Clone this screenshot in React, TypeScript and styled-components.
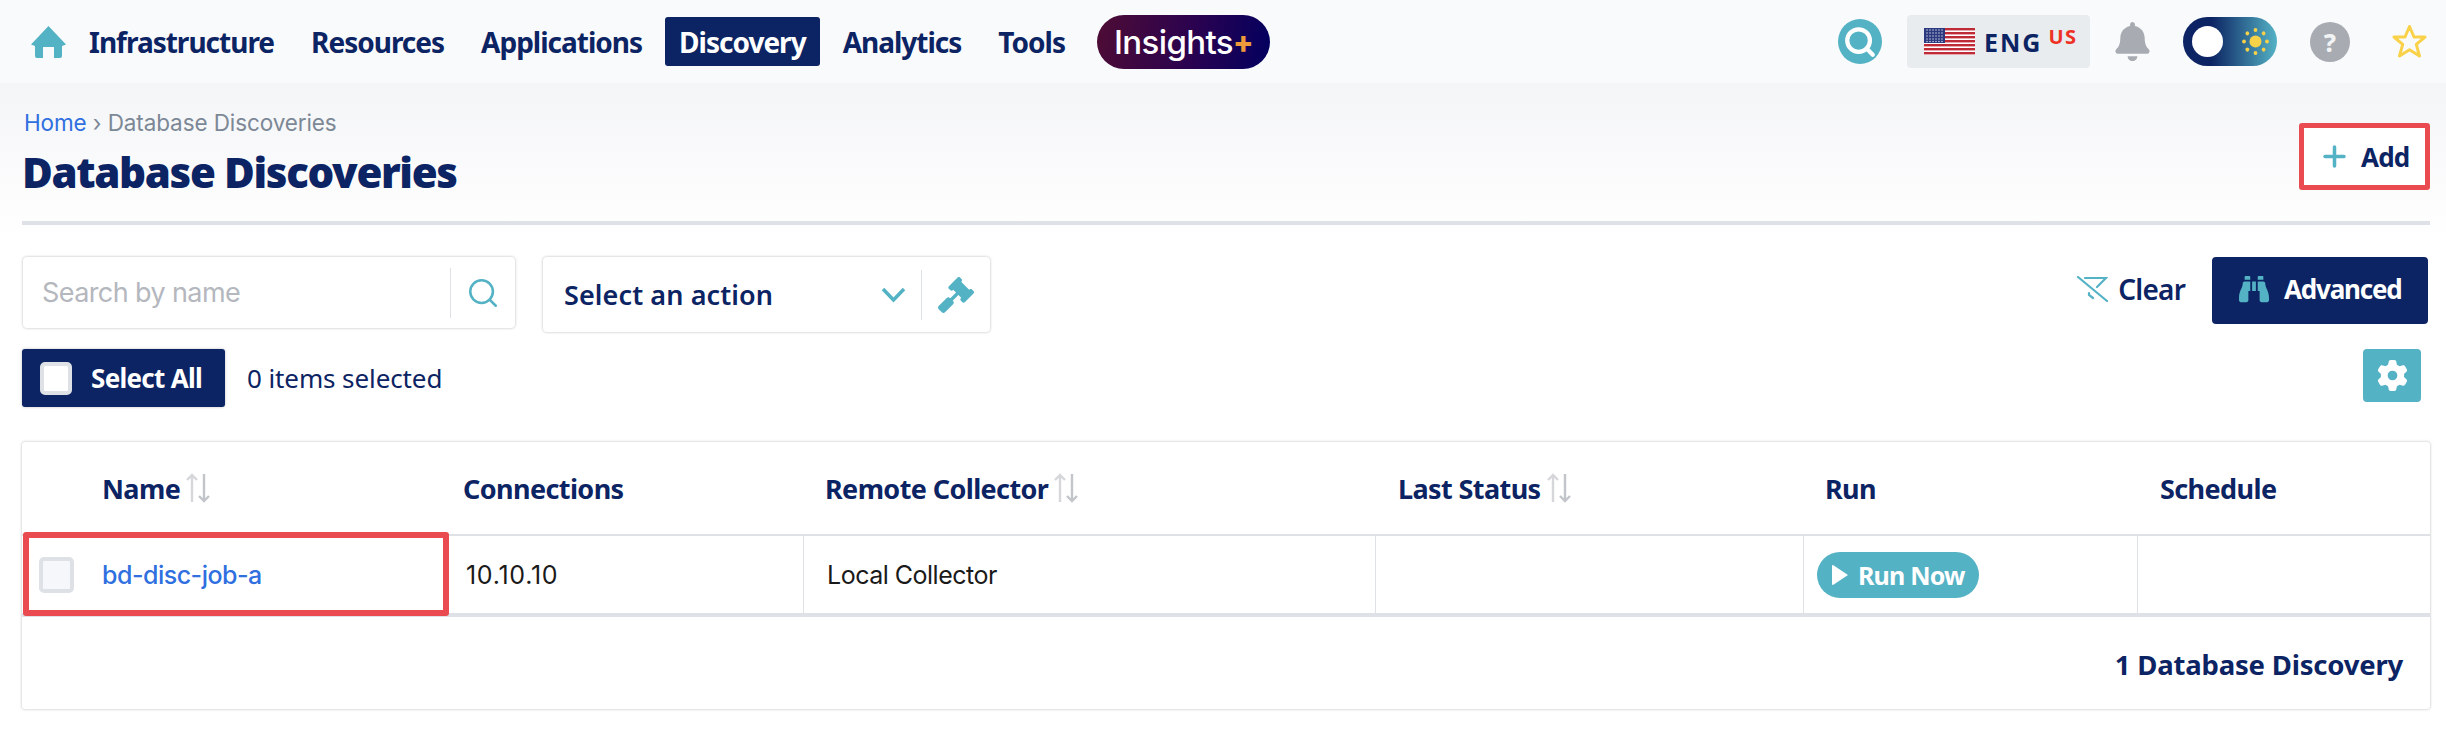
import React from "react";
import styled, { createGlobalStyle } from "styled-components";
import { Search } from "lucide-react";
import { FaGavel, FaBinoculars, FaBell } from "react-icons/fa";
import { FaGear } from "react-icons/fa6";

const NAVY = "#0c2463";
const TEAL = "#54b2c5";
const HEAD = `"Noto Sans", "Open Sans", sans-serif`;
const BODY = `"Inter", "Noto Sans", sans-serif`;

const GlobalStyle = createGlobalStyle`
  html, body {
    margin: 0;
    background: #fff;
    font-family: ${BODY};
    color: ${NAVY};
  }
  * { box-sizing: border-box; }
`;

const TopBar = styled.header`
  height: 83px;
  display: flex;
  align-items: center;
  padding: 0 19px 0 31px;
  background: #f9fafc;
`;

const HomeLink = styled.a`
  width: 35px;
  height: 32px;
  margin-right: 9px;
  display: flex;
`;

const NavLink = styled.a<{ $active?: boolean }>`
  height: 49px;
  display: flex;
  align-items: center;
  padding: 0 14px;
  margin-right: 9px;
  border-radius: 3px;
  font: 700 28px ${HEAD};
  letter-spacing: -1px;
  color: ${(p) => (p.$active ? "#fff" : NAVY)};
  background: ${(p) => (p.$active ? NAVY : "transparent")};
`;

const InsightsPill = styled.a`
  width: 173px;
  height: 54px;
  margin-left: 9px;
  border-radius: 27px;
  display: flex;
  align-items: center;
  justify-content: center;
  background: linear-gradient(100deg, #4e0c34 0%, #2a0250 55%, #02005f 100%);
  color: #fff;
  font: 500 33px ${BODY};
  letter-spacing: -0.6px;
`;

const InsightsPlus = styled.span`
  color: #ee9a3a;
  font-weight: 800;
  font-size: 30px;
`;

const TopRight = styled.div`
  margin-left: auto;
  display: flex;
  align-items: center;
`;

const SearchCircle = styled.span`
  width: 44px;
  height: 45px;
  border-radius: 50%;
  background: ${TEAL};
  display: flex;
  align-items: center;
  justify-content: center;
  color: #fff;
  margin-right: 25px;
`;

const LangBox = styled.div`
  width: 183px;
  height: 53px;
  border-radius: 4px;
  background: #e9ecef;
  display: flex;
  align-items: center;
  padding-left: 17px;
  margin-right: 25px;
`;

const LangText = styled.span`
  font: 700 25px ${HEAD};
  letter-spacing: 2px;
  margin-left: 9px;
`;

const LangRegion = styled.span`
  font: 700 20px ${HEAD};
  letter-spacing: 1.5px;
  color: #ee3124;
  margin: -11px 0 0 6px;
`;

const BellIcon = styled(FaBell)`
  width: 35px;
  height: 39px;
  color: #a8acb2;
  margin-right: 33px;
`;

const ThemeToggle = styled.div`
  width: 94px;
  height: 49px;
  border-radius: 25px;
  background: linear-gradient(90deg, ${NAVY} 30%, ${TEAL} 100%);
  display: flex;
  align-items: center;
  justify-content: space-between;
  padding: 0 8px 0 9px;
  margin-right: 33px;
`;

const ToggleKnob = styled.span`
  width: 31px;
  height: 31px;
  border-radius: 50%;
  background: #fff;
`;

const HelpCircle = styled.span`
  width: 40px;
  height: 40px;
  border-radius: 50%;
  background: #a8acb2;
  color: #f2f3f5;
  display: flex;
  align-items: center;
  justify-content: center;
  font: 800 25px ${HEAD};
  margin-right: 42px;
`;

const Main = styled.main`
  padding: 0 16px 0 22px;
  background: linear-gradient(180deg, #f4f5f7 0, #ffffff 160px);
  height: 647px;
`;

const PageHead = styled.div`
  height: 142px;
  display: flex;
  justify-content: space-between;
  border-bottom: 4px solid #dee2e6;
`;

const Crumbs = styled.div`
  padding-top: 26px;
  font: 400 22.5px/28px ${BODY};
  color: #7c8896;
  letter-spacing: -0.1px;
  padding-left: 2px;
`;

const CrumbLink = styled.a`
  color: #2f6fe0;
`;

const Title = styled.h1`
  margin: 7px 0 0;
  font: 900 42px/56px ${HEAD};
  letter-spacing: -1.35px;
`;

const AddButton = styled.button`
  width: 131px;
  height: 67px;
  margin-top: 40px;
  background: #fff;
  border: 5px solid #e94b50;
  border-radius: 3px;
  display: flex;
  align-items: center;
  padding: 0 0 0 19px;
  gap: 15px;
  color: ${NAVY};
  font: 700 26px ${HEAD};
  letter-spacing: -0.8px;
`;

const ToolRow = styled.div`
  display: flex;
  align-items: flex-start;
  margin-top: 32px;
`;

const SearchField = styled.div`
  width: 492px;
  height: 71px;
  margin-left: 1px;
  background: #fff;
  border-radius: 4px;
  box-shadow: 0 0 3px rgba(0, 0, 0, 0.28);
  display: flex;
  align-items: center;
  padding-left: 19px;
`;

const Placeholder = styled.span`
  flex: 1;
  font: 400 27px ${BODY};
  letter-spacing: -0.6px;
  color: #b4b7bd;
`;

const FieldIcon = styled.span<{ $width: number }>`
  width: ${(p) => p.$width}px;
  height: 50px;
  border-left: 1px solid #dee2e6;
  display: flex;
  align-items: center;
  justify-content: center;
  color: ${TEAL};
`;

const ActionSelect = styled(SearchField)`
  width: 447px;
  height: 75px;
  margin-left: 28px;
  padding-left: 21px;
`;

const ActionLabel = styled.span`
  flex: 1;
  font: 600 27px ${HEAD};
  letter-spacing: 0.1px;
`;

const Chevron = styled.svg`
  margin-right: 15px;
`;

const RightTools = styled.div`
  margin-left: auto;
  display: flex;
  align-items: flex-start;
`;

const ClearLink = styled.a`
  display: flex;
  align-items: center;
  height: 63px;
  gap: 10px;
  font: 600 28px ${HEAD};
  letter-spacing: -0.8px;
  margin-right: 27px;
`;

const AdvancedButton = styled.button`
  width: 216px;
  height: 67px;
  margin-right: 2px;
  border: 0;
  border-radius: 4px;
  background: ${NAVY};
  display: flex;
  align-items: center;
  padding: 0 0 3px 27px;
  gap: 15px;
  color: #fff;
  font: 700 26px ${HEAD};
  letter-spacing: -1.2px;
`;

const SelectRow = styled.div`
  display: flex;
  align-items: flex-start;
  margin-top: 17px;
  height: 58px;
`;

const SelectAll = styled.button`
  width: 203px;
  height: 58px;
  border: 0;
  border-radius: 3px;
  background: ${NAVY};
  box-shadow: 0 0 3px rgba(0, 0, 0, 0.25);
  display: flex;
  align-items: center;
  padding-left: 18px;
  gap: 19px;
  color: #fff;
  font: 700 26px ${HEAD};
  letter-spacing: -0.7px;
`;

const CheckSquare = styled.span<{ $size: number }>`
  width: ${(p) => (p.$size === 33 ? 32 : 35)}px;
  height: ${(p) => p.$size}px;
  flex: none;
  border-radius: 5px;
  background: ${(p) => (p.$size === 33 ? "#fff" : "#f5f7fa")};
  border: 4px solid #dee2e6;
`;

const SelectedCount = styled.span`
  margin-left: 22px;
  font: 400 26px/58px ${HEAD};
  letter-spacing: -0.1px;
`;

const GearButton = styled.button`
  margin-left: auto;
  margin-right: 9px;
  width: 58px;
  height: 53px;
  border: 0;
  border-radius: 4px;
  background: ${TEAL};
  color: #fff;
  display: flex;
  align-items: center;
  justify-content: center;
`;

const TableCard = styled.section`
  margin-top: 35px;
  height: 267px;
  background: #fff;
  border-radius: 3px;
  box-shadow: 0 0 3px rgba(0, 0, 0, 0.28);
`;

const Row = styled.div<{ $height: number }>`
  position: relative;
  height: ${(p) => p.$height}px;
  display: grid;
  grid-template-columns: 426px 355px 572px 428px 334px 1fr;
`;

const HeadCell = styled.div<{ $pad: number }>`
  display: flex;
  align-items: center;
  gap: 5px;
  padding-left: ${(p) => p.$pad}px;
  font: 700 27px ${HEAD};
  letter-spacing: -0.6px;
`;

const DataRow = styled(Row)`
  border-top: 2px solid #dee2e6;
  border-bottom: 4px solid #dee2e6;
`;

const Cell = styled.div<{ $pad: number; $first?: boolean }>`
  display: flex;
  align-items: center;
  padding-left: ${(p) => p.$pad}px;
  border-left: ${(p) => (p.$first ? "0" : "1px solid #dee2e6")};
  font: 400 25px ${BODY};
  letter-spacing: -0.5px;
  color: #1a1a1a;
`;

const IpCell = styled(Cell)`
  letter-spacing: 0.7px;
`;

const JobLink = styled.a`
  color: #2f6fe0;
  margin-left: 28px;
  font-weight: 500;
`;

const RunNow = styled.button`
  width: 162px;
  height: 46px;
  border: 0;
  border-radius: 23px;
  background: ${TEAL};
  color: #fff;
  display: flex;
  align-items: center;
  gap: 9px;
  padding-left: 14px;
  font: 700 25px ${HEAD};
  letter-spacing: -0.8px;
`;

const RowHighlight = styled.div`
  position: absolute;
  left: 1px;
  top: -4px;
  width: 426px;
  height: 84px;
  border: 6px solid #e94b50;
  border-radius: 3px;
  pointer-events: none;
`;

const Footer = styled.div`
  height: 94px;
  display: flex;
  align-items: center;
  justify-content: flex-end;
  padding-right: 27px;
  font: 700 27.5px ${HEAD};
  letter-spacing: -0.2px;
`;

const Home = () => (
  <svg width="35" height="32" viewBox="0 0 35 32" fill={TEAL}>
    <path d="M17.5 0 35 18.5 31 20v10a2 2 0 0 1-2 2h-6V21h-11v11H6a2 2 0 0 1-2-2V20L0 18.5Z" />
  </svg>
);

const Flag = () => (
  <svg width="51" height="27" viewBox="0 0 51 27">
    <rect width="51" height="27" fill="#fff" />
    {[0, 4, 8, 12, 16, 20, 24].map((y) => (
      <rect key={y} y={y} width="51" height="2.4" fill="#bf2a37" />
    ))}
    <rect width="21" height="15" fill="#2b3a7e" />
    {[2, 5, 8, 11, 14, 17].map((x) =>
      [2, 5, 8, 11, 13.5].map((y) => (
        <circle key={`${x}-${y}`} cx={x + 1} cy={y} r="0.7" fill="#dfe3f2" />
      ))
    )}
  </svg>
);

const Sun = () => (
  <svg width="27" height="27" viewBox="0 0 27 27" fill="#f7d148">
    <circle cx="13.5" cy="13.5" r="6" />
    {[0, 45, 90, 135, 180, 225, 270, 315].map((a) => (
      <circle key={a} cx="13.5" cy="2" r="1.9" transform={`rotate(${a} 13.5 13.5)`} />
    ))}
  </svg>
);

const FavStar = () => (
  <svg width="35" height="35" viewBox="0 0 35 35" fill="none" stroke="#f9d24a" strokeWidth="3" strokeLinejoin="round">
    <path d="M17.5 2.5 22 13h11l-8.7 7.4L27.5 32l-10-6.3L7.5 32l3.2-11.6L2 13h11Z" />
  </svg>
);

const Plus = () => (
  <svg width="23" height="23" viewBox="0 0 23 23" stroke={TEAL} strokeWidth="3.5" strokeLinecap="round">
    <path d="M11.5 2v19M2 11.5h19" />
  </svg>
);

const ClearFilter = () => (
  <svg width="31" height="26" viewBox="0 0 31 26" fill="none" stroke={TEAL} strokeWidth="2.2" strokeLinecap="round">
    <path d="M1 1 30 25M8 2h21l-9 9M12 17v2l4 3" />
  </svg>
);

const SortArrows = () => (
  <svg width="26" height="30" viewBox="0 0 26 30" fill="none" strokeWidth="2.4">
    <path d="M7 29V2M2 7l5-5 5 5" stroke="#d5d7da" />
    <path d="M19 1v27M14 23l5 5 5-5" stroke="#c2c5c9" />
  </svg>
);

const PlayMark = () => (
  <svg width="18" height="22" viewBox="0 0 18 22" fill="#fff">
    <path d="M2 1 17 11 2 21a1 1 0 0 1-1-1V2a1 1 0 0 1 1-1Z" />
  </svg>
);

const columns: { label: string; pad: number; sort?: boolean }[] = [
  { label: "Name", pad: 80, sort: true },
  { label: "Connections", pad: 15 },
  { label: "Remote Collector", pad: 22, sort: true },
  { label: "Last Status", pad: 23, sort: true },
  { label: "Run", pad: 22 },
  { label: "Schedule", pad: 23 },
];

export default function App() {
  return (
    <>
      <GlobalStyle />
      <TopBar>
        <HomeLink>
          <Home />
        </HomeLink>
        {["Infrastructure", "Resources", "Applications", "Discovery", "Analytics", "Tools"].map((item) => (
          <NavLink key={item} $active={item === "Discovery"}>
            {item}
          </NavLink>
        ))}
        <InsightsPill>
          Insights<InsightsPlus>+</InsightsPlus>
        </InsightsPill>
        <TopRight>
          <SearchCircle>
            <Search size={34} strokeWidth={3} />
          </SearchCircle>
          <LangBox>
            <Flag />
            <LangText>ENG</LangText>
            <LangRegion>US</LangRegion>
          </LangBox>
          <BellIcon />
          <ThemeToggle>
            <ToggleKnob />
            <Sun />
          </ThemeToggle>
          <HelpCircle>?</HelpCircle>
          <FavStar />
        </TopRight>
      </TopBar>
      <Main>
        <PageHead>
          <div>
            <Crumbs>
              <CrumbLink>Home</CrumbLink> › Database Discoveries
            </Crumbs>
            <Title>Database Discoveries</Title>
          </div>
          <AddButton>
            <Plus />
            Add
          </AddButton>
        </PageHead>
        <ToolRow>
          <SearchField>
            <Placeholder>Search by name</Placeholder>
            <FieldIcon $width={65}>
              <Search size={34} strokeWidth={1.8} />
            </FieldIcon>
          </SearchField>
          <ActionSelect>
            <ActionLabel>Select an action</ActionLabel>
            <Chevron width="25" height="16" viewBox="0 0 25 16" fill="none" stroke={TEAL} strokeWidth="3.5">
              <path d="M2 2l10.5 11L23 2" />
            </Chevron>
            <FieldIcon $width={69}>
              <FaGavel size={36} />
            </FieldIcon>
          </ActionSelect>
          <RightTools>
            <ClearLink>
              <ClearFilter />
              Clear
            </ClearLink>
            <AdvancedButton>
              <FaBinoculars size={30} color={TEAL} />
              Advanced
            </AdvancedButton>
          </RightTools>
        </ToolRow>
        <SelectRow>
          <SelectAll>
            <CheckSquare $size={33} />
            Select All
          </SelectAll>
          <SelectedCount>0 items selected</SelectedCount>
          <GearButton>
            <FaGear size={31} />
          </GearButton>
        </SelectRow>
        <TableCard>
          <Row $height={92}>
            {columns.map((c) => (
              <HeadCell key={c.label} $pad={c.pad}>
                {c.label}
                {c.sort && <SortArrows />}
              </HeadCell>
            ))}
          </Row>
          <DataRow $height={83}>
            <Cell $pad={17} $first>
              <CheckSquare $size={36} />
              <JobLink>bd-disc-job-a</JobLink>
            </Cell>
            <IpCell $pad={17}>10.10.10</IpCell>
            <Cell $pad={23}>Local Collector</Cell>
            <Cell $pad={23} />
            <Cell $pad={13}>
              <RunNow>
                <PlayMark />
                Run Now
              </RunNow>
            </Cell>
            <Cell $pad={23} />
            <RowHighlight />
          </DataRow>
          <Footer>1 Database Discovery</Footer>
        </TableCard>
      </Main>
    </>
  );
}
